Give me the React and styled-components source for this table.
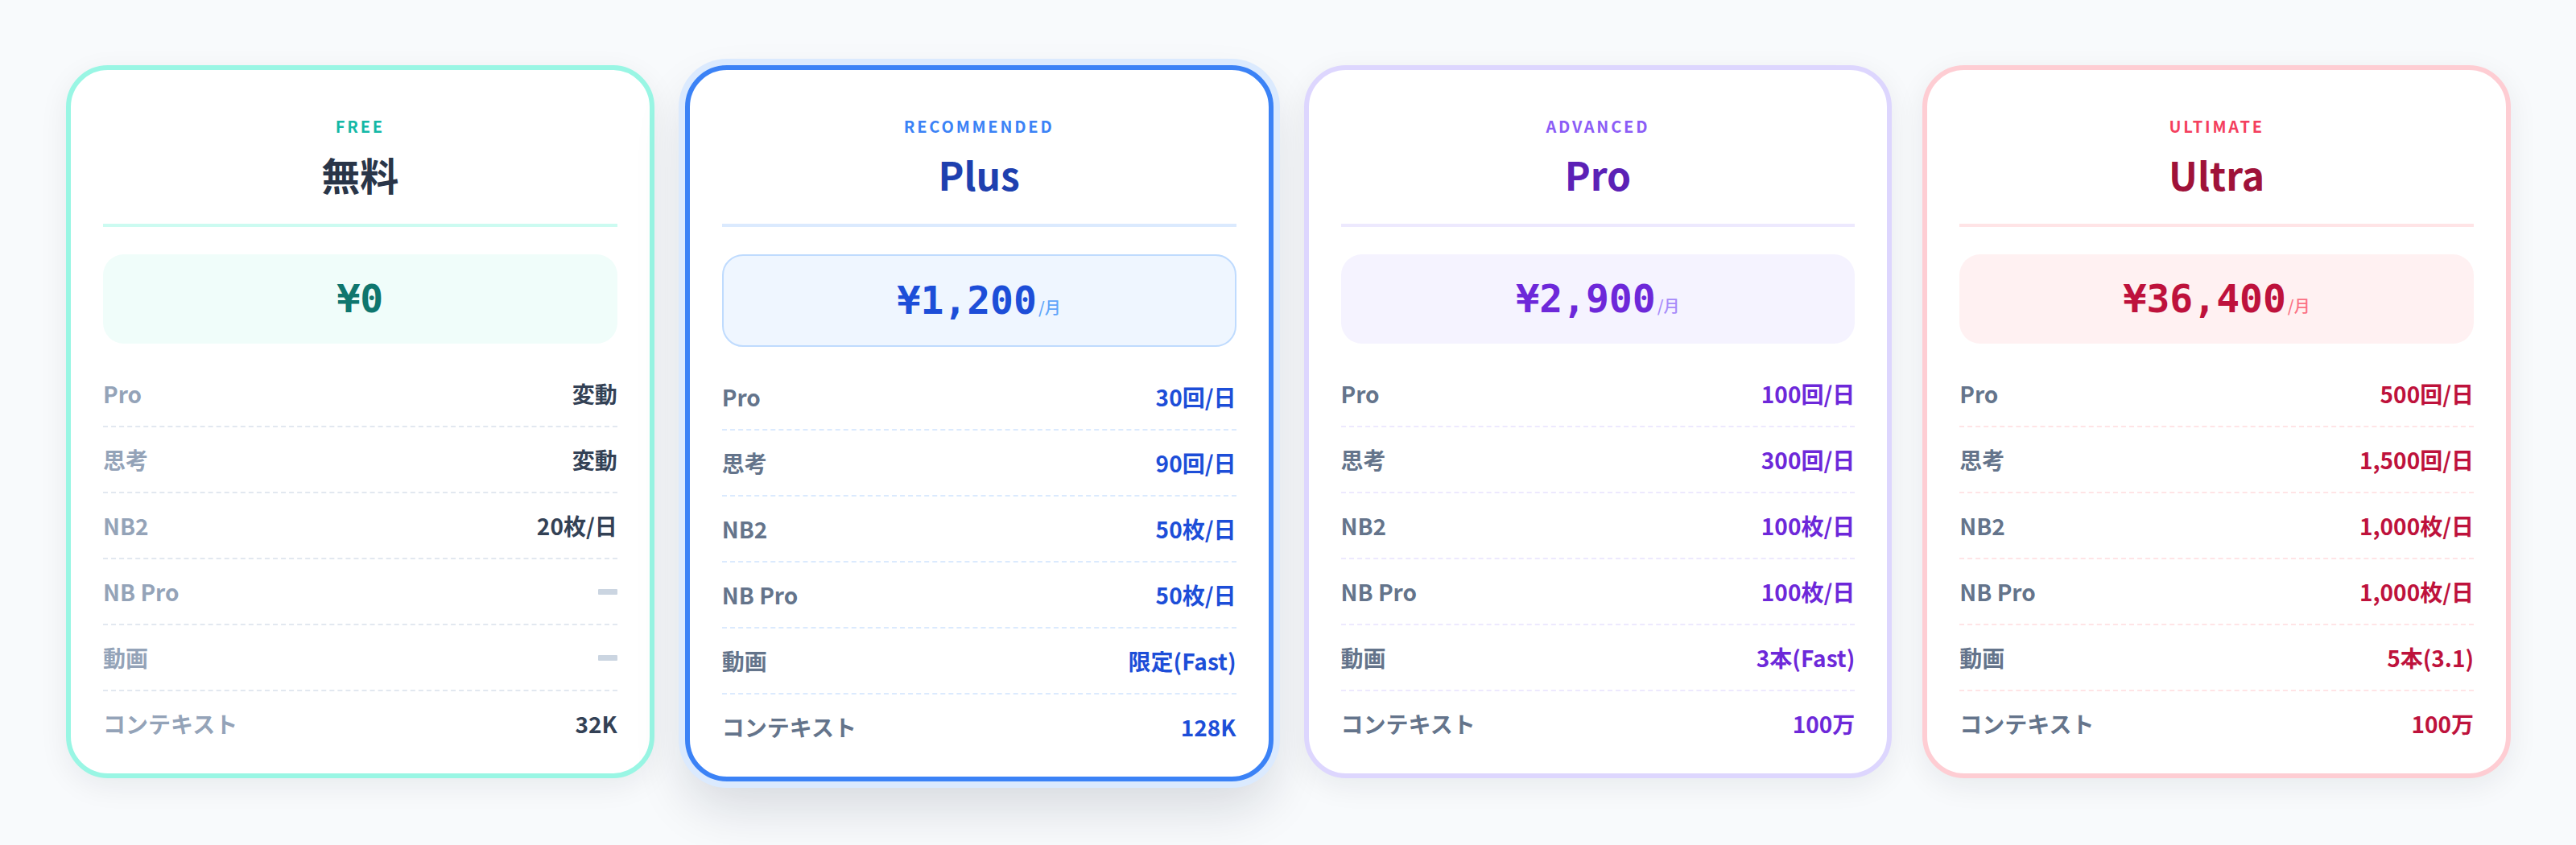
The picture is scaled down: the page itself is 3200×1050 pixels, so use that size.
import styled, { createGlobalStyle } from "styled-components";

const GlobalStyle = createGlobalStyle`
  html, body {
    margin: 0;
    padding: 0;
    background: #f8fafc;
  }
  body {
    font-family: "Noto Sans CJK JP", "Noto Sans", sans-serif;
    -webkit-font-smoothing: antialiased;
  }
`;

const TONES = {
  free: {
    border: "#99f6e4",
    ring: null,
    tier: "#14b8a6",
    title: "#293548",
    rule: "#ccfbf1",
    priceBg: "#f0fdfa",
    priceBorder: null,
    price: "#0f766e",
    per: "#5eead4",
    label: "#94a3b8",
    value: "#334155",
    dash: "#e2e8f0",
  },
  plus: {
    border: "#3b82f6",
    ring: "#dbeafe",
    tier: "#3b82f6",
    title: "#1e40af",
    rule: "#dbeafe",
    priceBg: "#eff6ff",
    priceBorder: "#bfdbfe",
    price: "#1d4ed8",
    per: "#60a5fa",
    label: "#64748b",
    value: "#1d4ed8",
    dash: "#dbeafe",
  },
  pro: {
    border: "#ddd6fe",
    ring: null,
    tier: "#8b5cf6",
    title: "#5b21b6",
    rule: "#ede9fe",
    priceBg: "#f5f3ff",
    priceBorder: null,
    price: "#6d28d9",
    per: "#a78bfa",
    label: "#64748b",
    value: "#6d28d9",
    dash: "#ede9fe",
  },
  ultra: {
    border: "#fecdd3",
    ring: null,
    tier: "#f43f5e",
    title: "#9f1239",
    rule: "#ffe4e6",
    priceBg: "#fff1f2",
    priceBorder: null,
    price: "#be123c",
    per: "#fb7185",
    label: "#64748b",
    value: "#be123c",
    dash: "#ffe4e6",
  },
};

const PLANS = [
  {
    id: "free",
    tier: "FREE",
    name: "無料",
    price: "¥0",
    per: false,
    rows: [
      ["Pro", "変動"],
      ["思考", "変動"],
      ["NB2", "20枚/日"],
      ["NB Pro", null],
      ["動画", null],
      ["コンテキスト", "32K"],
    ],
  },
  {
    id: "plus",
    tier: "RECOMMENDED",
    name: "Plus",
    price: "¥1,200",
    per: true,
    rows: [
      ["Pro", "30回/日"],
      ["思考", "90回/日"],
      ["NB2", "50枚/日"],
      ["NB Pro", "50枚/日"],
      ["動画", "限定(Fast)"],
      ["コンテキスト", "128K"],
    ],
  },
  {
    id: "pro",
    tier: "ADVANCED",
    name: "Pro",
    price: "¥2,900",
    per: true,
    rows: [
      ["Pro", "100回/日"],
      ["思考", "300回/日"],
      ["NB2", "100枚/日"],
      ["NB Pro", "100枚/日"],
      ["動画", "3本(Fast)"],
      ["コンテキスト", "100万"],
    ],
  },
  {
    id: "ultra",
    tier: "ULTIMATE",
    name: "Ultra",
    price: "¥36,400",
    per: true,
    rows: [
      ["Pro", "500回/日"],
      ["思考", "1,500回/日"],
      ["NB2", "1,000枚/日"],
      ["NB Pro", "1,000枚/日"],
      ["動画", "5本(3.1)"],
      ["コンテキスト", "100万"],
    ],
  },
];

const Page = styled.main`
  min-height: 1050px;
  box-sizing: border-box;
  padding: 81px 81px 80px 82px;
  display: grid;
  grid-template-columns: repeat(4, 1fr);
  gap: 38px;
  align-items: start;
`;

const Card = styled.section`
  box-sizing: border-box;
  background: #ffffff;
  border: 6px solid ${(p) => p.$tone.border};
  border-radius: 52px;
  padding: 58px 40px 22px;
  display: flex;
  flex-direction: column;
  box-shadow: ${(p) =>
    p.$tone.ring
      ? `0 0 0 8px ${p.$tone.ring}, 0 32px 64px rgba(15, 23, 42, 0.14)`
      : "0 10px 36px rgba(15, 23, 42, 0.07)"};
`;

const Tier = styled.div`
  text-align: center;
  font-size: 20px;
  line-height: 24px;
  font-weight: 700;
  letter-spacing: 2.8px;
  color: ${(p) => p.$tone.tier};
`;

const PlanName = styled.h2`
  margin: 18px 0 0;
  text-align: center;
  font-size: 48px;
  line-height: 58px;
  font-weight: 700;
  color: ${(p) => p.$tone.title};
`;

const Rule = styled.hr`
  margin: 33px 0 0;
  border: 0;
  height: 4px;
  background: ${(p) => p.$tone.rule};
`;

const PriceBox = styled.div`
  margin-top: 34px;
  padding: 26px 0;
  border-radius: 26px;
  background: ${(p) => p.$tone.priceBg};
  border: ${(p) => (p.$tone.priceBorder ? `2px solid ${p.$tone.priceBorder}` : "0")};
  display: flex;
  justify-content: center;
  align-items: baseline;
`;

const Amount = styled.span`
  font-family: "DejaVu Sans Mono", "Liberation Mono", monospace;
  font-size: 48px;
  line-height: 59px;
  font-weight: 700;
  color: ${(p) => p.$tone.price};
`;

const Per = styled.span`
  margin-left: 2px;
  font-size: 20px;
  font-weight: 500;
  color: ${(p) => p.$tone.per};
`;

const Specs = styled.ul`
  list-style: none;
  margin: 22px 0 0;
  padding: 0;
`;

const Spec = styled.li`
  display: flex;
  justify-content: space-between;
  align-items: center;
  padding: 23px 0;
  font-size: 28px;
  line-height: 34px;
  border-bottom: 2px dashed ${(p) => p.$tone.dash};

  &:last-child {
    border-bottom: 0;
  }
`;

const SpecLabel = styled.span`
  font-weight: 600;
  color: ${(p) => p.$tone.label};
`;

const SpecValue = styled.span`
  font-weight: 700;
  color: ${(p) => p.$tone.value};
`;

const Empty = styled.span`
  display: inline-block;
  width: 24px;
  height: 7px;
  border-radius: 1px;
  background: #cbd5e1;
`;

function PlanCard({ plan }) {
  const tone = TONES[plan.id];
  return (
    <Card $tone={tone}>
      <Tier $tone={tone}>{plan.tier}</Tier>
      <PlanName $tone={tone}>{plan.name}</PlanName>
      <Rule $tone={tone} />
      <PriceBox $tone={tone}>
        <Amount $tone={tone}>{plan.price}</Amount>
        {plan.per && <Per $tone={tone}>/月</Per>}
      </PriceBox>
      <Specs>
        {plan.rows.map(([label, value]) => (
          <Spec key={label} $tone={tone}>
            <SpecLabel $tone={tone}>{label}</SpecLabel>
            {value ? <SpecValue $tone={tone}>{value}</SpecValue> : <Empty />}
          </Spec>
        ))}
      </Specs>
    </Card>
  );
}

export default function App() {
  return (
    <>
      <GlobalStyle />
      <Page>
        {PLANS.map((plan) => (
          <PlanCard key={plan.id} plan={plan} />
        ))}
      </Page>
    </>
  );
}
